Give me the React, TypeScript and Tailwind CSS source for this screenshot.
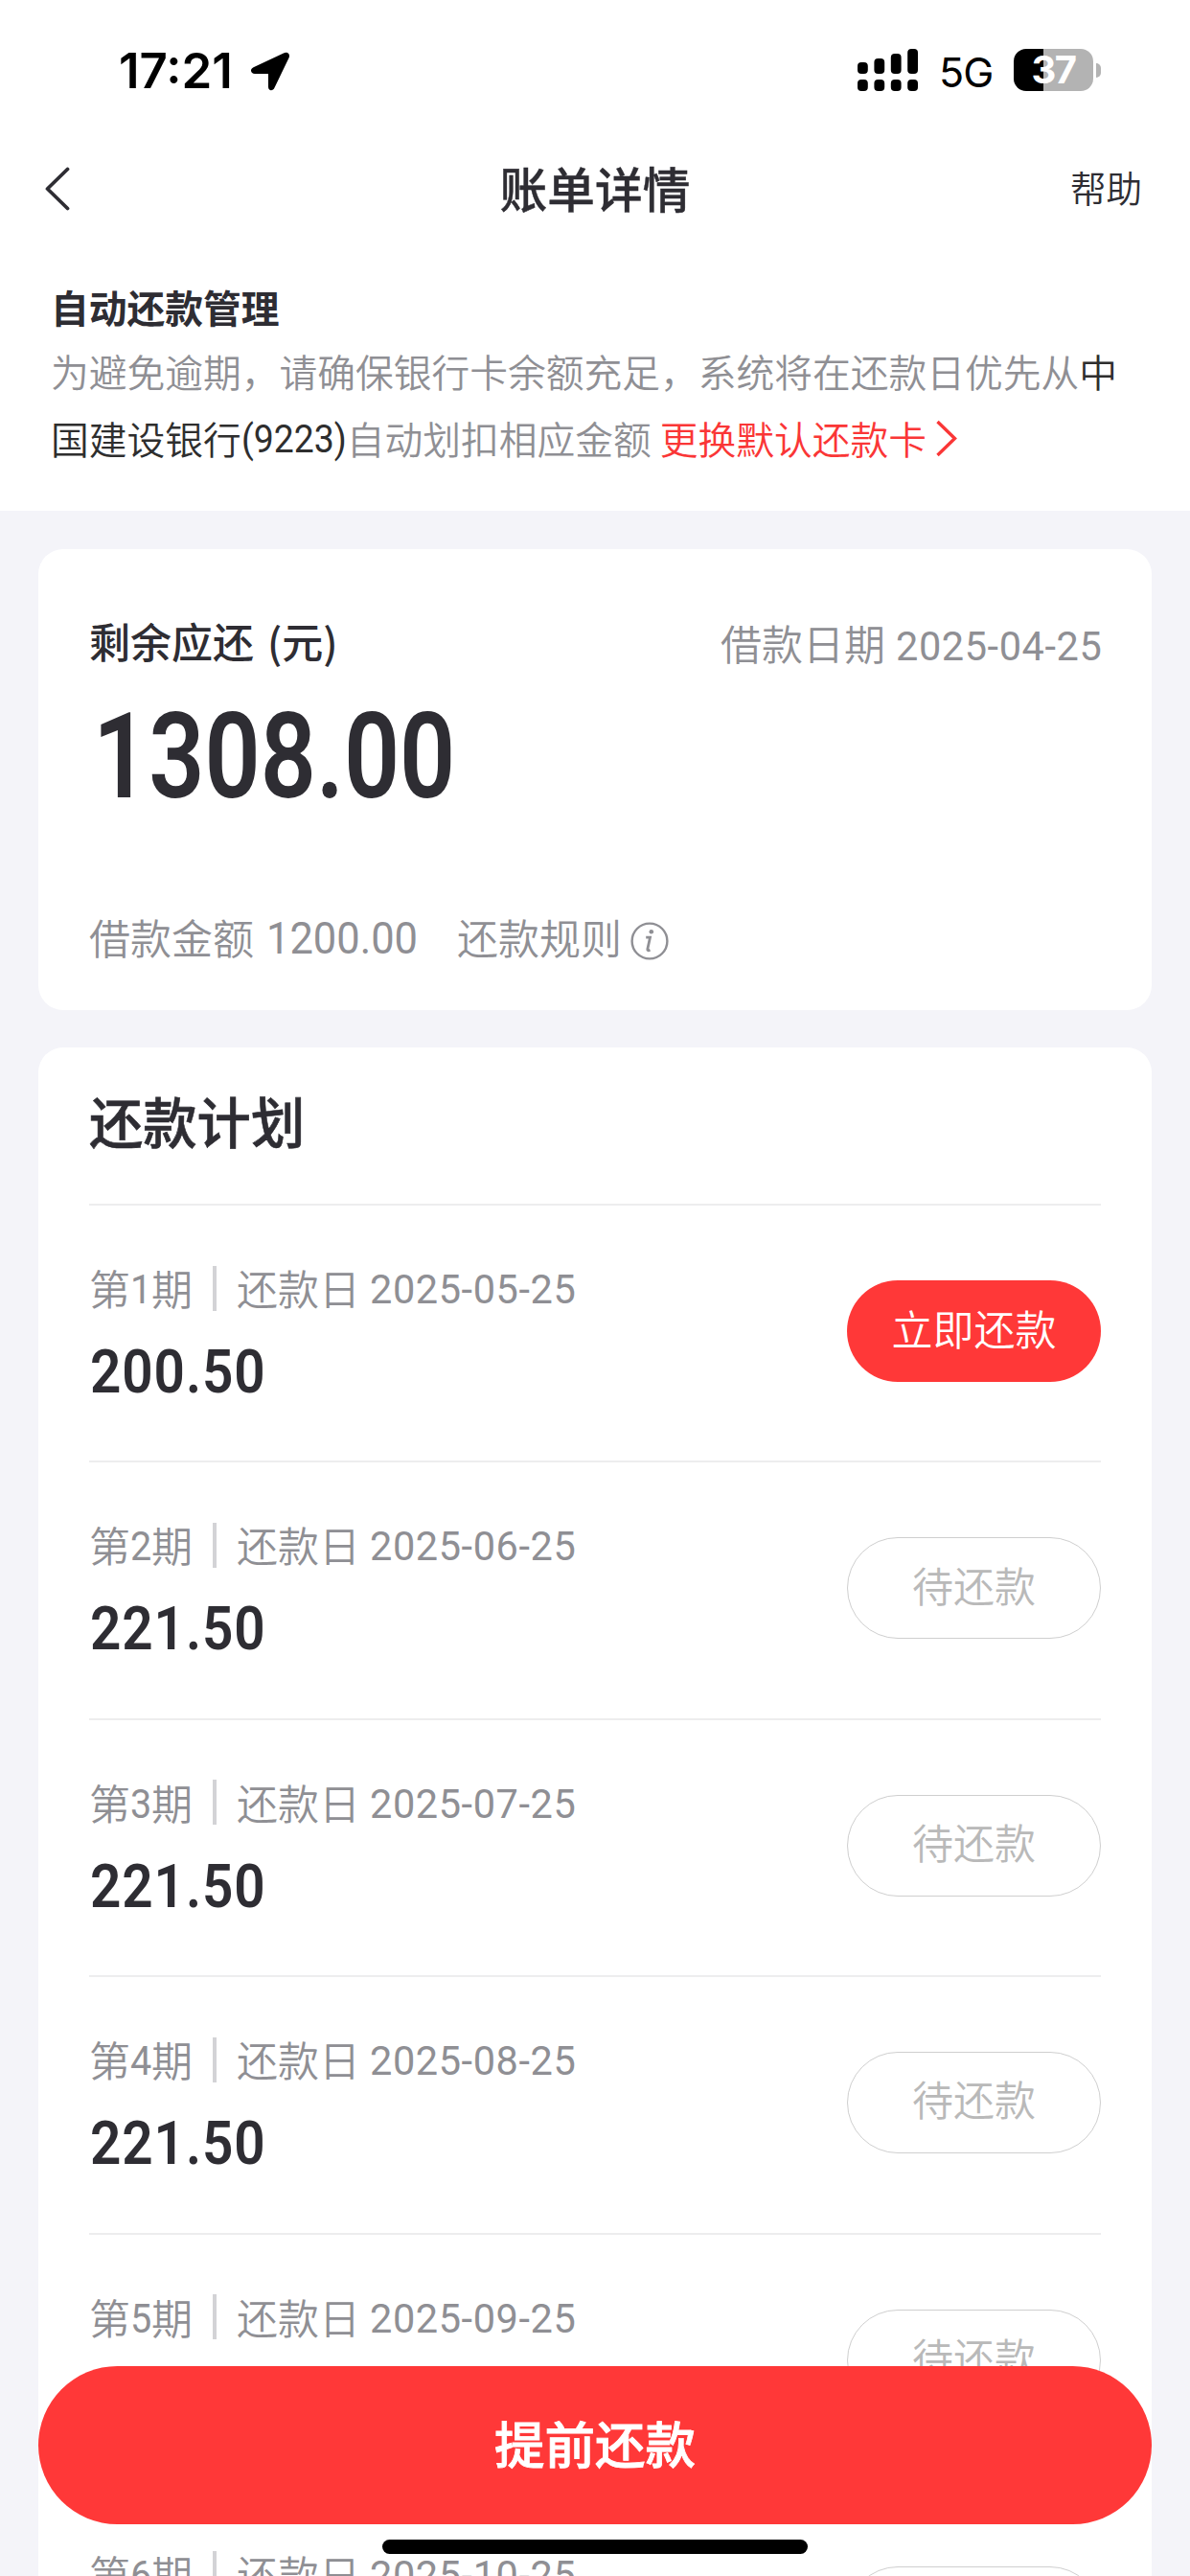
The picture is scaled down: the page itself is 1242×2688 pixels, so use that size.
import React from "react";

const CJK = "font-['Noto_Sans_CJK_SC',sans-serif]";
const DIN = "font-['Roboto',sans-serif]";

const plan = [
  { n: "1", date: "2025-05-25", amount: "200.50", due: true },
  { n: "2", date: "2025-06-25", amount: "221.50", due: false },
  { n: "3", date: "2025-07-25", amount: "221.50", due: false },
  { n: "4", date: "2025-08-25", amount: "221.50", due: false },
  { n: "5", date: "2025-09-25", amount: "221.50", due: false },
  { n: "6", date: "2025-10-25", amount: "221.50", due: false },
];

/** A condensed run of digits: the outer box sets the room it takes, the inner one is narrowed. */
function Digits({ box, text, children }: { box: string; text: string; children: React.ReactNode }) {
  return (
    <span className={`inline-block whitespace-nowrap ${box}`}>
      <span className={`inline-block origin-left ${DIN} ${text}`}>{children}</span>
    </span>
  );
}

function SignalBars() {
  const tops = [65, 61, 56, 51];
  return (
    <svg width="64" height="44" viewBox="0 0 64 44" className="shrink-0">
      {tops.map((t, i) => (
        <g key={t}>
          <rect x={i * 17.4} y={t - 51} width="10.8" height={77 - t} rx="4" />
          <rect x={i * 17.4} y="32" width="10.8" height="12" rx="4" />
        </g>
      ))}
    </svg>
  );
}

function StatusBar() {
  return (
    <div className="flex h-[146px] items-center pl-[124px] pr-[93px] font-['Inter',sans-serif] text-black">
      <span className="mt-[2px] w-[138px] whitespace-nowrap text-[51px] font-semibold leading-[60px]">17:21</span>
      <svg width="40" height="41" viewBox="0 0 40 41" className="mt-[2px] shrink-0">
        <path d="M34.5 1.2C37.8-.5 41 2 39.700 6L24.500 37.500C23 41.500 18 41.200 18 36.500V23H4C-.500 23-1.500 18 2.500 16.200Z" />
      </svg>
      <div className="ml-auto flex items-center">
        <SignalBars />
        <span className="ml-[21px] mt-[4px] w-[78px] whitespace-nowrap text-[43px] font-normal leading-[50px] tracking-[-.8px]">5G</span>
        <div className="flex h-[44px] w-[83px] items-center justify-center rounded-[13px] bg-[linear-gradient(90deg,#000_0_37%,#b3b3b3_37%_100%)] text-[40px] font-bold leading-[44px] tracking-[-1.5px] text-white">
          37
        </div>
        <div className="ml-[3px] h-[15px] w-[5px] rounded-r-full bg-[#b3b3b3]" />
      </div>
    </div>
  );
}

function PlanRow({ n, date, amount, due }: (typeof plan)[number]) {
  return (
    <div className="flex h-[268.4px] items-start justify-between border-t-2 border-[#ededee]">
      <div className="pt-[55px]">
        <div className="flex h-[60px] items-center text-[43px] font-[350] leading-[60px] text-[#8f8f94]">
          <span>第</span>
          <Digits box="w-[22px]" text="scale-x-[.92] font-normal">{n}</Digits>
          <span>期</span>
          <span className="ml-[21px] mr-[21px] mt-[2px] h-[47px] w-[4px] bg-[#d3d3d6]" />
          <span className="w-[139px]">还款日</span>
          <Digits box="w-[214px]" text="scale-x-[.965] font-normal tracking-[.6px]">{date}</Digits>
        </div>
        <div className="ml-px mt-[24px] h-[70px] leading-[70px]">
          <Digits box="w-[180px]" text="scale-x-[.9] text-[63px] font-semibold tracking-[1px] text-[#2e2d33]">{amount}</Digits>
        </div>
      </div>
      {due ? (
        <button className="mt-[78px] h-[106px] w-[265px] rounded-full bg-[#ff3838] pb-[8px] text-[43px] font-[350] text-white">立即还款</button>
      ) : (
        <button className="mt-[78px] h-[106px] w-[265px] rounded-full border border-[#cfcfcf] pb-[9px] text-[43px] font-[350] text-[#b9b9b9]">待还款</button>
      )}
    </div>
  );
}

export default function App() {
  return (
    <div className={`relative h-[2688px] w-[1242px] overflow-hidden bg-[#f4f4f9] text-[#2e2d33] ${CJK}`}>
      <div className="h-[533px] bg-white">
        <StatusBar />
        <div className="grid h-[102px] grid-cols-3 items-center px-[50px]">
          <svg width="28" height="46" viewBox="0 0 28 46" fill="none" stroke="currentColor" strokeWidth="3.8" strokeLinecap="round" strokeLinejoin="round" className="-ml-[4px]">
            <path d="M24.500 2.500 3.500 23 24.500 43.500" />
          </svg>
          <h1 className="mb-[4px] text-center text-[49.7px] font-medium leading-[70px] [-webkit-text-stroke:0.4px_currentColor]">账单详情</h1>
          <span className="mb-[4px] text-right text-[37.5px] font-[350] leading-[60px]">帮助</span>
        </div>
        <div className="px-[53px] pt-[39px] text-[39.75px]">
          <h2 className="h-[65px] font-bold leading-[66px]">自动还款管理</h2>
          <p className="whitespace-nowrap font-[350] leading-[70px] text-[#8f8f94]">
            为避免逾期，请确保银行卡余额充足，系统将在还款日优先从<span className="text-[#2e2e2e]">中</span>
          </p>
          <div className="flex h-[70px] items-center whitespace-nowrap font-[350] leading-[70px] text-[#8f8f94]">
            <span className="text-[#2e2e2e]">国建设银行</span>
            <Digits box="w-[110px]" text="scale-x-[.94] font-normal text-[#2e2e2e]">(9223)</Digits>
            <span>自动划扣相应金额</span>
            <span className="ml-[9px] text-[#fa3636]">更换默认还款卡</span>
            <svg width="24" height="40" viewBox="0 0 24 40" fill="none" stroke="#fa3636" strokeWidth="3.4" className="ml-[9px]">
              <path d="M2.500 3 20.500 20.500 2.500 38" />
            </svg>
          </div>
        </div>
      </div>

      <section className="mx-[40px] mt-[40px] h-[481px] rounded-[26px] bg-white px-[53px] pt-[65px]">
        <div className="flex h-[60px] items-center justify-between text-[43px] leading-[60px]">
          <h3 className="flex font-medium">
            剩余应还<span className="ml-[14px]">(元)</span>
          </h3>
          <div className="mt-[7px] flex font-[350] text-[#8f8f94]">
            <span className="w-[183px]">借款日期</span>
            <Digits box="w-[214px]" text="scale-x-[.965] font-normal tracking-[.6px]">2025-04-25</Digits>
          </div>
        </div>
        <div className="ml-[4px] mt-[22px] h-[140px] leading-[140px]">
          <Digits box="w-[380px]" text="scale-x-[.822] text-[124px] font-semibold">1308.00</Digits>
        </div>
        <div className="mt-[87px] flex h-[60px] items-center text-[43px] font-[350] leading-[60px] text-[#8f8f94]">
          <span className="w-[185px]">借款金额</span>
          <Digits box="w-[199px]" text="scale-x-[.945] text-[46px] font-normal">1200.00</Digits>
          <span>还款规则</span>
          <svg width="40" height="40" viewBox="0 0 40 40" className="ml-[9px] mt-[9px]" fill="none" stroke="#8f8f94">
            <circle cx="20" cy="20" r="18.400" strokeWidth="2.400" />
            <path d="M16.200 16.200H20.500L17.800 28.500Q17.500 30.500 20.500 29.300" strokeWidth="2.800" />
            <circle cx="21.800" cy="10.200" r="2.300" fill="#8f8f94" stroke="none" />
          </svg>
        </div>
      </section>

      <section className="mx-[40px] mt-[39px] h-[1800px] rounded-[26px] bg-white px-[53px]">
        <h3 className="h-[163px] text-[56.3px] font-medium leading-[152px] [-webkit-text-stroke:0.6px_currentColor]">还款计划</h3>
        {plan.map((row) => (
          <PlanRow key={row.n} {...row} />
        ))}
      </section>

      <button className="absolute left-[40px] top-[2469px] h-[165px] w-[1162px] rounded-full bg-[#ff3838] pb-[6px] text-[52.5px] font-medium text-white [-webkit-text-stroke:0.8px_currentColor]">
        提前还款
      </button>
      <div className="absolute left-[399px] top-[2650px] h-[15px] w-[444px] rounded-full bg-black" />
    </div>
  );
}
